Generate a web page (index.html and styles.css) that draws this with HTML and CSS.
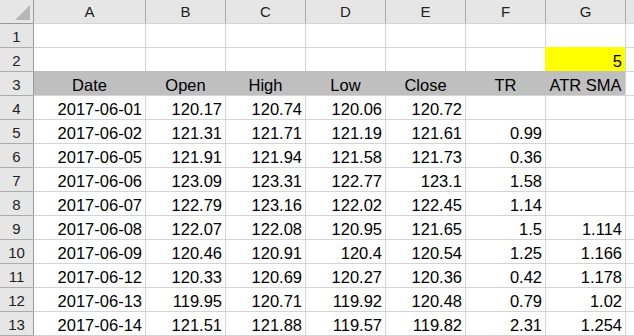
FILE: index.html
```html
<!DOCTYPE html>
<html>
<head>
<meta charset="utf-8">
<link rel="stylesheet" href="styles.css">
</head>
<body>
<div class="sheet">
  <div class="corner"><svg class="tri" width="15" height="15" viewBox="0 0 15 15"><polygon points="15,0 15,15 0,15" fill="#b7b7b7"/></svg></div>
  <div class="ch first">A</div><div class="ch">B</div><div class="ch">C</div><div class="ch">D</div><div class="ch">E</div><div class="ch">F</div><div class="ch">G</div><div class="ch"></div>

  <div class="rh top">1</div><div class="c first"></div><div class="c"></div><div class="c"></div><div class="c"></div><div class="c"></div><div class="c"></div><div class="c"></div><div class="c"></div>

  <div class="rh">2</div><div class="c first"></div><div class="c"></div><div class="c"></div><div class="c"></div><div class="c"></div><div class="c"></div><div class="c num yel">5</div><div class="c"></div>

  <div class="rh">3</div><div class="c first ctr gray">Date</div><div class="c ctr gray">Open</div><div class="c ctr gray">High</div><div class="c ctr gray">Low</div><div class="c ctr gray">Close</div><div class="c ctr gray">TR</div><div class="c ctr gray">ATR SMA</div><div class="c"></div>

  <div class="rh">4</div><div class="c first num">2017-06-01</div><div class="c num">120.17</div><div class="c num">120.74</div><div class="c num">120.06</div><div class="c num">120.72</div><div class="c num"></div><div class="c num"></div><div class="c"></div>

  <div class="rh">5</div><div class="c first num">2017-06-02</div><div class="c num">121.31</div><div class="c num">121.71</div><div class="c num">121.19</div><div class="c num">121.61</div><div class="c num">0.99</div><div class="c num"></div><div class="c"></div>

  <div class="rh">6</div><div class="c first num">2017-06-05</div><div class="c num">121.91</div><div class="c num">121.94</div><div class="c num">121.58</div><div class="c num">121.73</div><div class="c num">0.36</div><div class="c num"></div><div class="c"></div>

  <div class="rh">7</div><div class="c first num">2017-06-06</div><div class="c num">123.09</div><div class="c num">123.31</div><div class="c num">122.77</div><div class="c num">123.1</div><div class="c num">1.58</div><div class="c num"></div><div class="c"></div>

  <div class="rh">8</div><div class="c first num">2017-06-07</div><div class="c num">122.79</div><div class="c num">123.16</div><div class="c num">122.02</div><div class="c num">122.45</div><div class="c num">1.14</div><div class="c num"></div><div class="c"></div>

  <div class="rh">9</div><div class="c first num">2017-06-08</div><div class="c num">122.07</div><div class="c num">122.08</div><div class="c num">120.95</div><div class="c num">121.65</div><div class="c num">1.5</div><div class="c num">1.114</div><div class="c"></div>

  <div class="rh">10</div><div class="c first num">2017-06-09</div><div class="c num">120.46</div><div class="c num">120.91</div><div class="c num">120.4</div><div class="c num">120.54</div><div class="c num">1.25</div><div class="c num">1.166</div><div class="c"></div>

  <div class="rh">11</div><div class="c first num">2017-06-12</div><div class="c num">120.33</div><div class="c num">120.69</div><div class="c num">120.27</div><div class="c num">120.36</div><div class="c num">0.42</div><div class="c num">1.178</div><div class="c"></div>

  <div class="rh">12</div><div class="c first num">2017-06-13</div><div class="c num">119.95</div><div class="c num">120.71</div><div class="c num">119.92</div><div class="c num">120.48</div><div class="c num">0.79</div><div class="c num">1.02</div><div class="c"></div>

  <div class="rh">13</div><div class="c first num">2017-06-14</div><div class="c num">121.51</div><div class="c num">121.88</div><div class="c num">119.57</div><div class="c num">119.82</div><div class="c num">2.31</div><div class="c num">1.254</div><div class="c"></div>

  <div class="rh"></div><div class="c first"></div><div class="c"></div><div class="c"></div><div class="c"></div><div class="c"></div><div class="c"></div><div class="c"></div><div class="c"></div>
</div>
</body>
</html>
```
FILE: styles.css
```css
html, body {
  margin: 0;
  padding: 0;
  background: #ffffff;
  overflow: hidden;
  width: 634px;
  height: 336px;
}

.sheet {
  display: grid;
  grid-template-columns: 33px 112px repeat(6, 80px) 80px;
  grid-template-rows: 23px;
  grid-auto-rows: 24px;
  font-family: "Liberation Sans", Arial, sans-serif;
  color: #000;
}

.sheet > div {
  box-sizing: border-box;
  white-space: nowrap;
  overflow: hidden;
}

.corner {
  background: #e6e6e6;
  display: flex;
  justify-content: flex-end;
  align-items: flex-end;
  padding: 0 3px 3px 0;
}

.tri {
  display: block;
}

.ch {
  background: #e6e6e6;
  border-left: 1px solid #ababab;
  font-size: 15px;
  line-height: 22px;
  padding-top: 1px;
  text-align: center;
  color: #222;
}

.ch.first {
  border-left-color: #9b9b9b;
}

.rh {
  background: #e6e6e6;
  border-top: 1px solid #ababab;
  font-size: 15px;
  line-height: 21px;
  padding-top: 2px;
  text-align: center;
  color: #222;
}

.rh.top {
  border-top-color: #9b9b9b;
}

.c {
  border-left: 1px solid #d4d4d4;
  border-top: 1px solid #d4d4d4;
  font-size: 16.5px;
  line-height: 20px;
  padding: 3px 3px 0 3px;
}

.c.first {
  border-left-color: #9b9b9b;
}

.num {
  text-align: right;
}

.ctr {
  text-align: center;
}

.gray {
  background: #bfbfbf;
  border-top-color: #bfbfbf;
  border-left-color: #bfbfbf;
}

.gray.first {
  border-left-color: #9b9b9b;
}

.yel {
  background: #ffff00;
  border-top-color: #ffff00;
  border-left-color: #ffff00;
}
```
